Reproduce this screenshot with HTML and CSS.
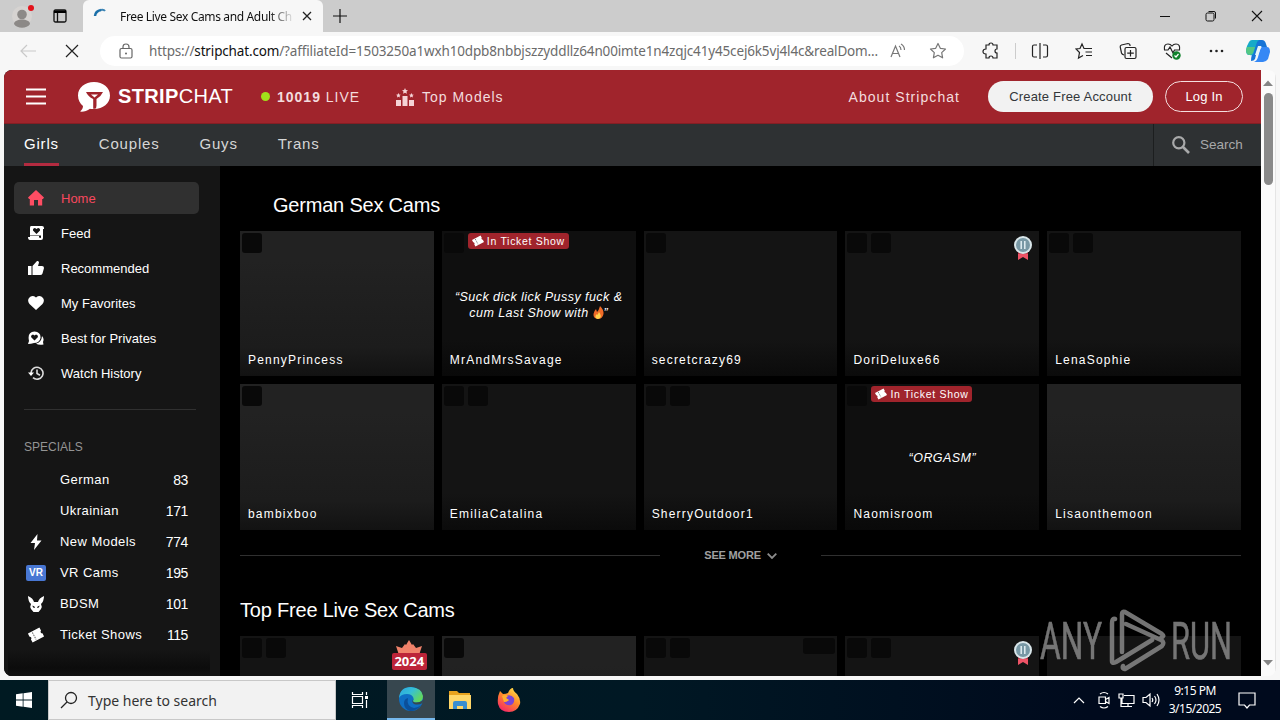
FILE: index.html
```html
<!DOCTYPE html>
<html lang="en">
    <head>
        <meta charset="utf-8">
        <meta name="viewport" content="width=device-width, initial-scale=1.0">
        <title>Free Live Sex Cams and Adult Chat</title>
        <link rel="stylesheet" href="styles.css">
    </head>
    <body>
        <!-- shared icons -->
        <svg class="defs" width="0" height="0">
            <symbol id="ticket" viewBox="0 0 16 16">
                <g transform="rotate(-28 8 8)"><path fill="currentColor" d="M1.500 3h13v3.500a1.600 1.600 0 0 0 0 3V13h-13V9.500a1.600 1.600 0 0 0 0-3z"/><path stroke="#666" stroke-dasharray="1.500 1" d="M6 4v8"/></g>
            </symbol>
            <symbol id="medal" viewBox="0 0 20 26">
                <path fill="#ee5366" d="M5 15h10v10l-5-3-5 3z"/><path fill="#b52c3d" d="M5 17h10v2H5z"/>
                <circle cx="10" cy="10" r="9" fill="#d9e6ea"/><circle cx="10" cy="10" r="7" fill="#7898a5"/>
                <path stroke="#e1eef3" stroke-width="1.500" d="M8.200 6v8M11.800 6v8"/>
            </symbol>
        </svg>

        <div class="tabstrip">
            <svg class="profile" width="24" height="28" viewBox="0 0 24 28"><circle cx="10" cy="14" r="10" fill="#d6d3d1"/><circle cx="10" cy="12.500" r="4.800" fill="#8c8987"/><path fill="#8c8987" d="M2 22c0-6 16-6 16 0-3 5-13 5-16 0z"/><circle cx="19" cy="6" r="3" fill="#e3131b"/></svg>
            <svg class="workspaces" width="14" height="14" viewBox="0 0 14 14"><path fill="none" stroke="#111" stroke-width="1.300" d="M2.500 1h9Q13 1 13 2.500v9q0 1.500-1.500 1.500h-9Q1 13 1 11.500v-9Q1 1 2.500 1zM4.500 4v9"/><path d="M1 1.500h12V4H1z"/></svg>
            <div class="tab">
                <svg width="16" height="16" viewBox="0 0 16 16"><path fill="none" stroke="#1b6fa8" stroke-width="2.500" d="M2 8Q2.500 3 8 2"/><path fill="none" stroke="#3c84b4" stroke-width="2" d="M8 2q3-.5 4 1"/></svg>
                <span class="tab-title">Free Live Sex Cams and Adult Ch</span>
                <svg class="tab-close" width="10" height="10" viewBox="0 0 10 10"><path stroke="#222" stroke-width="1.300" d="M1 1l8 8M9 1L1 9"/></svg>
            </div>
            <svg class="newtab" width="14" height="14" viewBox="0 0 14 14"><path stroke="#111" stroke-width="1.200" d="M7 0v14M0 7h14"/></svg>
            <div class="win-buttons">
                <svg width="12" height="12" viewBox="0 0 12 12"><path stroke="#111" d="M1 6.500h10"/></svg>
                <svg width="12" height="12" viewBox="0 0 12 12"><rect x="1" y="3" width="8" height="8" rx="1.500" fill="none" stroke="#111"/><path fill="none" stroke="#111" d="M3.500 1.500H9Q10.500 1.500 10.500 3v5.500"/></svg>
                <svg width="12" height="12" viewBox="0 0 12 12"><path stroke="#111" stroke-width="1.100" d="M1 1l10 10M11 1L1 11"/></svg>
            </div>
        </div>

        <div class="toolbar">
            <svg class="back" width="16" height="14" viewBox="0 0 16 14"><path fill="none" stroke="#c9c9c9" stroke-width="1.200" d="M16 7H1M7 1L1 7l6 6"/></svg>
            <svg class="stop" width="14" height="14" viewBox="0 0 14 14"><path stroke="#222" stroke-width="1.200" d="M1 1l12 12M13 1L1 13"/></svg>
            <div class="address">
                <svg width="14" height="16" viewBox="0 0 14 16"><path fill="none" stroke="#666" stroke-width="1.200" d="M2.500 5.500h9q1.500 0 1.500 1.500v6.500q0 1.500-1.500 1.500h-9Q1 15 1 13.500V7q0-1.500 1.500-1.500zM4 5.500V4q0-3 3-3t3 3v1.500"/><circle cx="7" cy="10.500" r="1" fill="#666"/></svg>
                <span class="url">https://<b>stripchat.com</b>/?affiliateId=1503250a1wxh10dpb8nbbjszzyddllz64n00imte1n4zqjc41y45cej6k5vj4l4c&amp;realDom...</span>
                <svg class="read" width="16" height="16" viewBox="0 0 16 16"><path fill="none" stroke="#777" stroke-width="1.200" d="M1 14L5.500 3 10 14M2.500 10.500h6M9 3q2 1 2 4M11 1q3.500 2 3.500 6"/></svg>
                <svg class="star" width="18" height="18" viewBox="0 0 18 18"><path fill="none" stroke="#777" stroke-width="1.200" stroke-linejoin="round" d="M9 1.500l2.300 4.800 5.200.7-3.800 3.600.9 5.200L9 13.300l-4.600 2.500.9-5.200L1.500 7l5.200-.7z"/></svg>
            </div>
            <div class="tools">
                <svg width="18" height="18" viewBox="0 0 18 18"><path d="M4 3h3q0-2 2-2t2 2h4v4q-2 0-2 2t2 2v5h-4q0-2-2-2t-2 2H4v-4q-3 0-3-2.500T4 7z"/></svg>
                <i class="sep"></i>
                <svg width="18" height="18" viewBox="0 0 18 18"><path d="M6 3H3Q1.500 3 1.500 4.500v9Q1.500 15 3 15h3M12 3h3q1.500 0 1.500 1.500v9q0 1.500-1.500 1.500h-3M9 1v16"/></svg>
                <svg width="18" height="18" viewBox="0 0 18 18"><path d="M11 6.500H9L7 2 5 6.500 1 7l3.500 3.500-1 5.500L8 13.500M11 6.500h6M10.500 10H17M11 13.500h6"/></svg>
                <svg width="18" height="18" viewBox="0 0 18 18"><path d="M5 13q-2-.5-2.500-2L1.200 5Q1 3.500 2.500 3L9 1.500q1.500 0 2 1.500v1M7.500 5.500h8q1.500 0 1.500 1.500v8q0 1.500-1.500 1.500h-8Q6 16.500 6 15V7q0-1.500 1.500-1.500zM11.500 8v6.500M8.200 11.200h6.600"/></svg>
                <svg width="18" height="18" viewBox="0 0 18 18"><path d="M1.500 8Q.5 2 5 2q2.500 0 4 2 1.500-2 4-2 4.500 0 3.500 6M1 8h4l2-3 3 6 1.500-3H17M3 11l6 5"/><circle cx="13.500" cy="13.500" r="4.200" fill="#10822c" stroke="none"/><path class="tick" d="M11.500 13.500l1.500 1.500 2.500-3"/></svg>
                <svg width="18" height="18" viewBox="0 0 18 18"><g fill="#222" stroke="none"><circle cx="4" cy="9" r="1.300"/><circle cx="9.500" cy="9" r="1.300"/><circle cx="15" cy="9" r="1.300"/></g></svg>
            </div>
            <svg class="copilot" width="24" height="24" viewBox="0 0 24 24"><path fill="#1674d6" d="M7 1h9q3 0 4 4l1 3h-7q-2 0-3 4l-2 8q-1 2-4 2 0-3 1-7z"/><path fill="#16aac8" d="M6 1h7q-2 1-3 5L8 13q-1 4-4 3H3q-3 0-3-5 1-5 3-8 1-2 3-2z"/><path fill="#54c783" d="M1 8h8l-2 6q-1 2-4 2-3-1-3-5z"/><path fill="#3588f5" d="M16 8h5q3 0 3 5l-2 7q-2 3-5 3H8q3-1 4-5l2-7q1-3 2-3z"/><path fill="#e6f5fa" d="M12 7h3.500L12 16H9z"/></svg>
        </div>

        <div class="viewport">
            <div class="page">
                <header class="header">
                    <svg class="burger" width="20" height="17" viewBox="0 0 20 17"><path stroke="#fff" stroke-width="2" d="M0 1.500h20M0 8.500h20M0 15.500h20"/></svg>
                    <svg class="logo" width="32" height="30" viewBox="0 0 32 30"><path fill="#fff" d="M16 0c9 0 16 5.500 16 13.500S25 27 16 27c-2 0-3 0-4-.3C9 29 5 30 2 29.500c2-1.500 3-3.500 3-5.500C2 21.500 0 18 0 13.500 0 5.500 7 0 16 0z"/><path fill="#a0242c" d="M8 10h17q-2 4.500-6.500 7v6.500q0 2.500-1.300 3.300h-2V17Q10 14.500 8 10z"/><path fill="#fff" d="M13 12.500h7l-3.500 3z"/></svg>
                    <span class="brand"><b>STRIP</b>CHAT</span>
                    <span class="dot"></span>
                    <span class="live"><b>10019</b> LIVE</span>
                    <svg class="podium" width="18" height="18" viewBox="0 0 18 18"><path fill="#f5d3d6" d="M0 12h5v6H0zM6.500 8h5v10h-5zM13 12h5v6h-5zM9 0l.9 1.900 2.100.3-1.500 1.400.4 2.200L9 4.800l-1.900 1 .4-2.200L6 2.200l2.100-.3zM2.500 5l.7 1.500 1.600.2-1.200 1.100.3 1.700-1.400-.8-1.500.8.3-1.700L0 6.700l1.700-.2zM15.500 5l.7 1.500 1.600.2-1.200 1.100.3 1.700-1.400-.8-1.500.8.3-1.700L13 6.700l1.700-.2z"/></svg>
                    <span class="top-models">Top Models</span>
                    <span class="about">About Stripchat</span>
                    <button class="btn btn-create">Create Free Account</button>
                    <button class="btn btn-login">Log In</button>
                </header>

                <nav class="nav">
                    <a class="active">Girls</a><a>Couples</a><a>Guys</a><a>Trans</a>
                    <div class="search">
                        <svg width="18" height="18" viewBox="0 0 18 18"><circle cx="6.800" cy="6.800" r="5.600" fill="none" stroke="#a8a9aa" stroke-width="2.200"/><path stroke="#a8a9aa" stroke-width="2.600" d="M11 11l6 6"/></svg>
                        <span>Search</span>
                    </div>
                </nav>

                <div class="content">
                    <aside class="sidebar">
                        <ul class="menu">
                            <li class="active"><svg viewBox="0 0 16 16"><path d="M8 0l8 7.500-1 1.500h-.8v6.500H10V10H6v5.500H1.800V9H1L0 7.500z"/></svg>Home</li>
                            <li><svg viewBox="0 0 16 16"><path fill-rule="evenodd" d="M3 1h11q2 0 2 2v1h-1v9q0 2-2 2H2q-2 0-2-3h2V9q0-1 0-6 0-2 1-2zM8.500 9L12 5.500q.3-2.500-2-2.500L8.500 4 7 3q-2.300 0-2 2.500zM2 11h9v1.500l2 .5v-2.500H2z"/></svg>Feed</li>
                            <li><svg viewBox="0 0 16 16"><path d="M0 6h3.500v9H0zM4.500 6L9 1q2-.5 2 1.500L10 6h4q2 0 2 2l-1.500 5.500Q14 15 12 15H4.500z"/></svg>Recommended</li>
                            <li><svg viewBox="0 0 16 16"><path d="M8 15L1.500 9Q-1 5.500 1 3q3-3.500 7-.5Q12-.5 15 3q2 2.500-.5 6z"/></svg>My Favorites</li>
                            <li><svg viewBox="0 0 16 16"><path fill-rule="evenodd" d="M0 14l1-3Q-1 2 6.500 1.500 13 2 12.500 8q-1 5-6.500 5-3 1-6 1zM6.500 10.500L10 7q0-2.500-2-2.500l-1.500 1L5 4.500q-2 0-2 2.500z"/><path d="M14 6q2.500 2.500 1 6l.5 2.500q-5 1-7.500-1 5.500-1 6-7.500z"/></svg>Best for Privates</li>
                            <li><svg viewBox="0 0 16 16"><path fill="none" stroke="#ddd" stroke-width="1.600" d="M3 8a6 6 0 1 1 2 4.700M9 4.500V8.500l3 1.700"/><path d="M0 7.500h6L3 11z"/></svg>Watch History</li>
                        </ul>
                        <h4>SPECIALS</h4>
                        <ul class="specials">
                            <li><i></i>German <span>83</span></li>
                            <li><i></i>Ukrainian <span>171</span></li>
                            <li><i><svg viewBox="0 0 16 16"><path d="M9.500 0L2.500 9H7l-1 7 7.500-9.500H9z"/></svg></i>New Models <span>774</span></li>
                            <li><i><b class="vr">VR</b></i>VR Cams <span>195</span></li>
                            <li><i><svg viewBox="0 0 16 16"><path fill-rule="evenodd" d="M0 0q5 2 6 6h4q1-4 6-6 0 5-3 8 1.500 3 0 5l-2.500 3h-5L3 13q-1.500-2 0-5Q0 5 0 0zM4.500 9.500q0 2.500 2.500 2.500.2-2-2.500-2.500zM11.500 9.500Q9 10 9 12q2.500 0 2.500-2.500z"/></svg></i>BDSM <span>101</span></li>
                            <li><i><svg viewBox="0 0 16 16"><use href="#ticket"/></svg></i>Ticket Shows <span>115</span></li>
                        </ul>
                        <div class="fade"></div>
                    </aside>

                    <main class="main">
                        <h2 class="indent">German Sex Cams</h2>
                        <div class="grid">
                            <div class="card light"><div class="badges"><i></i></div><span class="name">PennyPrincess</span></div>
                            <div class="card dark"><div class="badges"><i></i><span class="show"><svg width="12" height="12"><use href="#ticket"/></svg>In Ticket Show</span></div><p class="topic">“Suck dick lick Pussy fuck &amp;<br>cum Last Show with <svg width="11" height="13" viewBox="0 0 11 13"><path fill="#ef6b28" d="M7 0q4 4 3.500 8-1 5-5.500 5-5-.5-4.500-5Q1 5 3 3l1 3q2-2 3-6z"/><path fill="#ffd34d" d="M6 6q3 4 1 6-3 2-4.500-.5Q2 9.500 4 8l.5 1z"/></svg>”</p><span class="name">MrAndMrsSavage</span></div>
                            <div class="card"><div class="badges"><i></i></div><span class="name">secretcrazy69</span></div>
                            <div class="card"><div class="badges"><i></i><i></i></div><svg class="medal"><use href="#medal"/></svg><span class="name">DoriDeluxe66</span></div>
                            <div class="card"><div class="badges"><i></i><i></i></div><span class="name">LenaSophie</span></div>
                            <div class="card light"><div class="badges"><i></i></div><span class="name">bambixboo</span></div>
                            <div class="card"><div class="badges"><i></i><i></i></div><span class="name">EmiliaCatalina</span></div>
                            <div class="card"><div class="badges"><i></i><i></i></div><span class="name">SherryOutdoor1</span></div>
                            <div class="card dark"><div class="badges"><i></i><span class="show"><svg width="12" height="12"><use href="#ticket"/></svg>In Ticket Show</span></div><p class="topic">“ORGASM”</p><span class="name">Naomisroom</span></div>
                            <div class="card light"><span class="name">Lisaonthemoon</span></div>
                        </div>
                        <div class="more"><span>SEE MORE <svg width="10" height="6" viewBox="0 0 10 6"><path fill="none" stroke="#8c8c8c" stroke-width="1.800" d="M.7.7L5 5 9.300.7"/></svg></span></div>
                        <h2>Top Free Live Sex Cams</h2>
                        <div class="grid">
                            <div class="card"><div class="badges"><i></i><i></i></div><div class="award"><svg width="28" height="15" viewBox="0 0 28 15"><path fill="#f0826a" d="M4 15L1 6l6 2 3-4 1 1 3-5 3 5 1-1 3 4 6-2-3 9z"/></svg><b>2024</b></div></div>
                            <div class="card light"><div class="badges"><i></i></div></div>
                            <div class="card"><div class="badges"><i></i><i></i></div><div class="quality"></div></div>
                            <div class="card"><div class="badges"><i></i><i></i></div><svg class="medal"><use href="#medal"/></svg></div>
                            <div class="card"></div>
                        </div>
                    </main>
                </div>
            </div>
            <div class="scrollbar">
                <svg width="10" height="6" viewBox="0 0 10 6"><path fill="#858585" d="M5 .5L10 6H0z"/></svg>
                <div class="thumb"></div>
                <svg width="10" height="6" viewBox="0 0 10 6"><path fill="#858585" d="M0 0h10L5 5.500z"/></svg>
            </div>
        </div>

        <div class="taskbar">
            <div class="start"><svg width="16" height="16" viewBox="0 0 16 16"><path fill="#fff" d="M0 2.300l6.700-1v6.300H0zM7.500 1.200L16 0v7.600H7.500zM0 8.400h6.700v6.300l-6.700-1zM7.500 8.400H16V16l-8.500-1.200z"/></svg></div>
            <div class="task-search">
                <svg width="18" height="18" viewBox="0 0 18 18"><g fill="none" stroke="#222" stroke-width="1.300"><circle cx="11" cy="7" r="5.500"/><path d="M7 11l-6 6"/></g></svg>
                <span>Type here to search</span>
            </div>
            <div class="app"><svg width="18" height="18" viewBox="0 0 18 18"><path fill="none" stroke="#fff" stroke-width="1.200" d="M1.500 1v2.500h10V1M1.500 17v-2.500h10V17M1.500 5.500h10v7h-10zM15.500 1v3M15.500 9v8"/><path fill="#fff" d="M14 5h3v3h-3z"/></svg></div>
            <div class="app open">
                <svg width="24" height="24" viewBox="0 0 24 24">
                    <defs><linearGradient id="eg" x1="0" x2="1" y1="0" y2=".6"><stop stop-color="#2ba6df"/><stop offset=".5" stop-color="#36bfd7"/><stop offset="1" stop-color="#64d85a"/></linearGradient></defs>
                    <circle cx="12" cy="12" r="12" fill="#0f6fc4"/>
                    <path fill="url(#eg)" d="M0 11Q1 0 12 0q11 1 12 9 0 6-6 6.500-4 .5-4-1.500 1-1 .5-3Q13 7 8 7 2 7 0 11z"/>
                    <path fill="#0b4f9a" d="M9 11q-2 8 6 10 4 0 7-3-4 6-11 6-6-2-6-8 0-4 4-5z"/>
                    <path fill="#37474f" d="M14.500 12q-2.500 3 .5 5 5 1.500 8.500-1l1-4q-2 3.500-7 3.500-5 0-3-3.500z"/>
                </svg>
            </div>
            <div class="app"><svg width="22" height="18" viewBox="0 0 22 18"><path fill="#e8a21d" d="M0 0h8l2 2h11v4H0z"/><path fill="#ffd668" d="M0 4h22v14H0z"/><path fill="#3a8ed0" d="M4 18v-6q0-2 2-2h10q2 0 2 2v6h-4v-3H8v3z"/></svg></div>
            <div class="app"><svg width="24" height="24" viewBox="0 0 24 24"><defs><linearGradient id="fx" x1=".8" x2=".2" y1="0" y2="1"><stop stop-color="#ffe04a"/><stop offset=".45" stop-color="#ff8a2a"/><stop offset="1" stop-color="#f5206b"/></linearGradient></defs><path fill="url(#fx)" d="M3 3l3 3q3 0 5-1 2-5 5-5 0 3 4 6 4 5 3 10-3 8-11 8-9 0-11-8Q0 9 3 3z"/><path fill="#7a45d6" d="M9 8q5-2 8 2 1 5-3 7-5 1-7-3 3 0 5-2-4-1-3-4z"/><path fill="#ffb02e" d="M5 8q3-2 6 0l-2 2 3 2q-2 2-5 2z"/></svg></div>
            <div class="tray">
                <svg width="12" height="8" viewBox="0 0 12 8"><path d="M1 7l5-5 5 5"/></svg>
                <svg width="14" height="18" viewBox="0 0 14 18"><path d="M2 6h6.500v6.500H2zM8.500 8.500L12 6.500v6L8.500 10.500M3 3q4-3 8 0M3 15.500q4 3 8 0"/></svg>
                <svg width="17" height="16" viewBox="0 0 17 16"><path d="M6 3.500h10v8H4v-5M10 11.500v3M6 14.500h8M1 2h4v4H1zM3 6v8.500h3"/></svg>
                <svg width="18" height="16" viewBox="0 0 18 16"><path d="M1 5.500h3L8 2v12l-4-3.500H1zM10 6q1.500 2 0 4M12.500 4q3 4 0 8M15 2q4 6 0 12"/></svg>
                <div class="clock">9:15 PM<br>3/15/2025</div>
                <svg width="18" height="17" viewBox="0 0 18 17"><path d="M1 1h16v12h-5.500L9 16l-2.500-3H1z"/></svg>
            </div>
        </div>

        <svg class="watermark" width="200" height="64" viewBox="0 0 200 64">
            <text x="1" y="50" textLength="62" lengthAdjust="spacingAndGlyphs">ANY</text>
            <path fill="none" stroke="#888" stroke-width="4.500" stroke-linejoin="round" stroke-linecap="round" d="M76 10Q73 9 73 14v38q0 3 4 1l36-22M83 43V5q0-3 3-2l37 22q3 2-1 4M86 60l37-23q3-4-1-6L87 15M86 60q-3 0-2-3"/>
            <text x="132" y="50" textLength="61" lengthAdjust="spacingAndGlyphs">RUN</text>
        </svg>
    </body>
</html>
```
FILE: styles.css
```css
*{
    box-sizing: border-box;
}

body{
    margin: 0;
    width: 1280px;
    height: 720px;
    overflow: hidden;
    display: flex;
    flex-direction: column;
    position: relative;
    background: #f7f7f7;
    font-family: "Liberation Sans", Arial, sans-serif;
    white-space: nowrap;
}
ul{
    list-style: none;
    margin: 0;
    padding: 0;
}
svg{
    flex-shrink: 0;
}
.defs{
    position: absolute;
}

/* browser chrome */
.tabstrip{
    height: 32px;
    flex-shrink: 0;
    background: #ccc;
    display: flex;
    align-items: center;
    padding-left: 12px;
    font-family: "Noto Sans", sans-serif;
}
.workspaces{
    margin-left: 17px;
}
.tab{
    width: 240px;
    height: 32px;
    margin-left: 16px;
    padding: 0 11px 0 10px;
    background: #f7f7f7;
    border-radius: 6px 6px 0 0;
    display: flex;
    align-items: center;
}
.tab-title{
    width: 175px;
    margin-left: 11px;
    font-size: 12px;
    letter-spacing: -0.35px;
    color: #111;
    -webkit-mask-image: linear-gradient(to right, #000 85%, transparent);
    mask-image: linear-gradient(to right, #000 85%, transparent);
}
.tab-close{
    margin-left: auto;
}
.newtab{
    margin-left: 10px;
}
.win-buttons{
    margin-left: auto;
    display: flex;
    gap: 34px;
    padding-right: 17px;
}
.toolbar{
    height: 38px;
    flex-shrink: 0;
    display: flex;
    align-items: center;
    padding-left: 20px;
    background: #f7f7f7;
}
.stop{
    margin-left: 29px;
}
.address{
    width: 864px;
    height: 30px;
    margin-left: 21px;
    padding: 0 17px 0 19px;
    border-radius: 15px;
    background: #fff;
    display: flex;
    align-items: center;
}
.url{
    width: 730px;
    margin-left: 16px;
    font-family: "Noto Sans", sans-serif;
    font-size: 13.5px;
    letter-spacing: -0.15px;
    color: #6b6b6b;
}
.url b{
    font-weight: normal;
    color: #111;
}
.star{
    margin-left: auto;
}
.read{
    margin-left: 11px;
}
.tools{
    margin-left: 18px;
    display: flex;
    align-items: center;
    gap: 26px;
}
.tools svg{
    fill: none;
    stroke: #222;
    stroke-width: 1.2;
}
.tools .tick{
    stroke: #fff;
}
.sep{
    width: 1px;
    height: 16px;
    margin: 0 -11px 0 -11px;
    background: #ccc;
}
.copilot{
    margin-left: 21px;
}

/* page frame */
.viewport{
    height: 606px;
    flex-shrink: 0;
    margin: 0 4px 4px;
    display: flex;
    border-radius: 8px;
    overflow: hidden;
    background: #fbfbfb;
}
.page{
    width: 1257px;
    display: flex;
    flex-direction: column;
    background: #000;
}
.scrollbar{
    width: 15px;
    padding: 10px 0;
    display: flex;
    flex-direction: column;
    align-items: center;
    border-right: 1px solid #e5e5e5;
}
.scrollbar svg:last-child{
    margin-top: auto;
}
.thumb{
    width: 9px;
    height: 92px;
    margin-top: 7px;
    border-radius: 5px;
    background: #8a8a8a;
}

.header{
    height: 54px;
    flex-shrink: 0;
    padding: 0 18px 0 22px;
    display: flex;
    align-items: center;
    background: #a0242c;
    border-bottom: 1px solid #841e24;
    color: #f3dcde;
    font-size: 14px;
    letter-spacing: 1px;
}
.logo{
    margin-left: 32px;
}
.brand{
    width: 116px;
    margin-left: 8px;
    font-size: 20px;
    letter-spacing: 0.35px;
    color: #fff;
}
.dot{
    width: 9px;
    height: 9px;
    margin-left: 27px;
    border-radius: 50%;
    background: #a2e01a;
}
.live{
    width: 82px;
    margin-left: 7px;
}
.podium{
    margin-left: 37px;
}
.top-models{
    margin-left: 8px;
}
.about{
    margin-left: auto;
    letter-spacing: 1.05px;
}
.btn{
    height: 31px;
    margin-left: 12px;
    padding: 0;
    border: 0;
    border-radius: 16px;
    font-family: inherit;
    font-size: 13px;
    letter-spacing: 0.18px;
}
.btn-create{
    width: 165px;
    margin-left: 28px;
    background: #f2f2f2;
    color: #33373a;
}
.btn-login{
    width: 78px;
    border: 1px solid #f5dfe0;
    background: none;
    color: #fff;
}
.nav{
    height: 42px;
    flex-shrink: 0;
    display: flex;
    gap: 40px;
    padding-left: 20px;
    background: #2e3133;
    color: #d5d6d6;
    font-size: 15px;
    letter-spacing: 0.8px;
    line-height: 39px;
}
.nav .active{
    border-bottom: 3px solid #b32b40;
    color: #fff;
}
.search{
    width: 108px;
    margin-left: auto;
    padding-left: 18px;
    border-left: 1px solid #1c1e1f;
    display: flex;
    align-items: center;
    gap: 10px;
    font-size: 13.5px;
    letter-spacing: 0;
    line-height: 42px;
    color: #a8a9aa;
}

.content{
    flex: 1;
    min-height: 0;
    display: flex;
}
.sidebar{
    width: 216px;
    height: 510px;
    padding: 16px 21px 0 10px;
    display: flex;
    flex-direction: column;
    background: #151515;
    color: #fff;
    font-size: 13px;
}
.menu{
    display: flex;
    flex-direction: column;
    gap: 3px;
}
.menu li{
    height: 32px;
    padding-left: 14px;
    border-radius: 5px;
    display: flex;
    align-items: center;
    gap: 17px;
    letter-spacing: 0;
}
.menu svg{
    width: 16px;
    height: 16px;
    fill: #fff;
}
.menu .active{
    background: #303030;
    color: #f8485e;
}
.menu .active svg{
    fill: #ff4d63;
}
.sidebar h4{
    margin: 20px 3px 0 10px;
    padding-top: 29px;
    border-top: 1px solid #303030;
    font-size: 12px;
    font-weight: normal;
    line-height: 16px;
    color: #949494;
}
.specials{
    margin-top: 9px;
    letter-spacing: 0.45px;
}
.specials li{
    height: 31px;
    padding: 0 11px 0 12px;
    display: flex;
    align-items: center;
}
.specials i{
    width: 20px;
    margin-right: 14px;
    display: flex;
    justify-content: center;
    color: #fff;
}
.specials svg{
    width: 16px;
    height: 16px;
    fill: #fff;
}
.specials span{
    margin-left: auto;
    padding-top: 1px;
    font-size: 14px;
    letter-spacing: -0.4px;
}
.vr{
    width: 20px;
    border-radius: 2px;
    background: #4877d3;
    font-size: 10px;
    font-style: normal;
    line-height: 16px;
    letter-spacing: 0;
    text-align: center;
}
.fade{
    height: 26px;
    margin: auto -11px 0 -6px;
    background: linear-gradient(#151515, #0c0c0c 70%, #121212);
}

.main{
    flex: 1;
    padding: 0 20px;
    overflow: hidden;
}
h2{
    height: 65px;
    margin: 0;
    padding-top: 14px;
    font-size: 20px;
    font-weight: normal;
    letter-spacing: -0.2px;
    line-height: 50px;
    color: #fff;
}
h2.indent{
    padding-left: 33px;
}
.grid{
    display: grid;
    grid-template-columns: repeat(5, 1fr);
    gap: 8px;
}
.card{
    position: relative;
    aspect-ratio: 4 / 3;
    background: linear-gradient(#141414 75%, #0b0b0b);
}
.card.light{
    background: linear-gradient(#222 20%, #1c1c1c 80%, #121212);
}
.card.dark{
    background: linear-gradient(#0f0f0f 75%, #090909);
}
.badges{
    display: flex;
    gap: 4px;
    padding: 2px;
}
.badges i{
    width: 20px;
    height: 20px;
    border-radius: 3px;
    background: #090909;
}
.show{
    width: 101px;
    height: 16px;
    padding-left: 4px;
    border-radius: 3px;
    display: flex;
    align-items: center;
    gap: 3px;
    background: #a0242c;
    color: #fff;
    font-size: 10.5px;
    letter-spacing: 0.7px;
}
.name{
    position: absolute;
    left: 8px;
    bottom: 8px;
    color: #fff;
    font-size: 12px;
    letter-spacing: 1.2px;
    line-height: 16px;
}
.topic{
    position: absolute;
    top: calc(50% + 1px);
    width: 100%;
    margin: 0;
    transform: translateY(-50%);
    color: #fff;
    font-size: 12.5px;
    font-style: italic;
    letter-spacing: 0.45px;
    line-height: 16px;
    text-align: center;
}
.topic svg{
    vertical-align: -2px;
}
.medal{
    position: absolute;
    top: 4px;
    right: 6px;
    width: 20px;
    height: 26px;
}
.award{
    position: absolute;
    top: 4px;
    right: 7px;
    display: flex;
    flex-direction: column;
    align-items: center;
}
.award b{
    width: 35px;
    height: 17px;
    margin-top: -2px;
    border-radius: 2px;
    background: #bd2439;
    color: #fff;
    font-family: "Noto Sans", sans-serif;
    font-size: 13px;
    line-height: 17px;
    text-align: center;
}
.quality{
    position: absolute;
    top: 2px;
    right: 2px;
    width: 32px;
    height: 16px;
    border-radius: 3px;
    background: #090909;
}
.more{
    height: 41px;
    padding-top: 10px;
    display: flex;
    align-items: center;
    color: #a0a0a0;
    font-size: 11px;
    font-weight: bold;
    letter-spacing: -0.2px;
}
.more span{
    width: 161px;
    text-align: center;
}
.more svg{
    margin-left: 3px;
}
.more::before,
.more::after{
    content: '';
    flex: 1;
    height: 1px;
    background: #303030;
}

/* windows taskbar */
.taskbar{
    height: 40px;
    flex-shrink: 0;
    display: flex;
    background: linear-gradient(to right, #001a22, #001824 50%, #000a1d 85%);
    color: #fff;
}
.start,
.app{
    width: 48px;
    display: flex;
    align-items: center;
    justify-content: center;
}
.app{
    margin-right: 1px;
}
.app.open{
    margin-left: 2px;
    background: #37474f;
    border-bottom: 2px solid #76b9ed;
}
.task-search{
    width: 288px;
    padding-left: 11px;
    border: 1px solid #c8c8c8;
    display: flex;
    align-items: center;
    gap: 10px;
    background: #f2f2f2;
    color: #333;
    font-family: "Noto Sans", sans-serif;
    font-size: 14px;
}
.tray{
    margin-left: auto;
    width: 207px;
    display: flex;
    align-items: center;
}
.tray svg{
    margin-right: 7px;
    fill: none;
    stroke: #fff;
    stroke-width: 1.2;
}
.tray svg:first-child{
    margin-right: 12px;
}
.clock{
    width: 56px;
    margin-right: 15px;
    font-family: "Noto Sans", sans-serif;
    font-size: 12px;
    letter-spacing: -0.5px;
    line-height: 18px;
    text-align: center;
}

.watermark{
    position: absolute;
    left: 1039px;
    top: 609px;
    opacity: 0.85;
}
.watermark text{
    font-family: Roboto, sans-serif;
    font-size: 51px;
    fill: #888;
    stroke: #888;
    stroke-width: 0.6px;
}
```
